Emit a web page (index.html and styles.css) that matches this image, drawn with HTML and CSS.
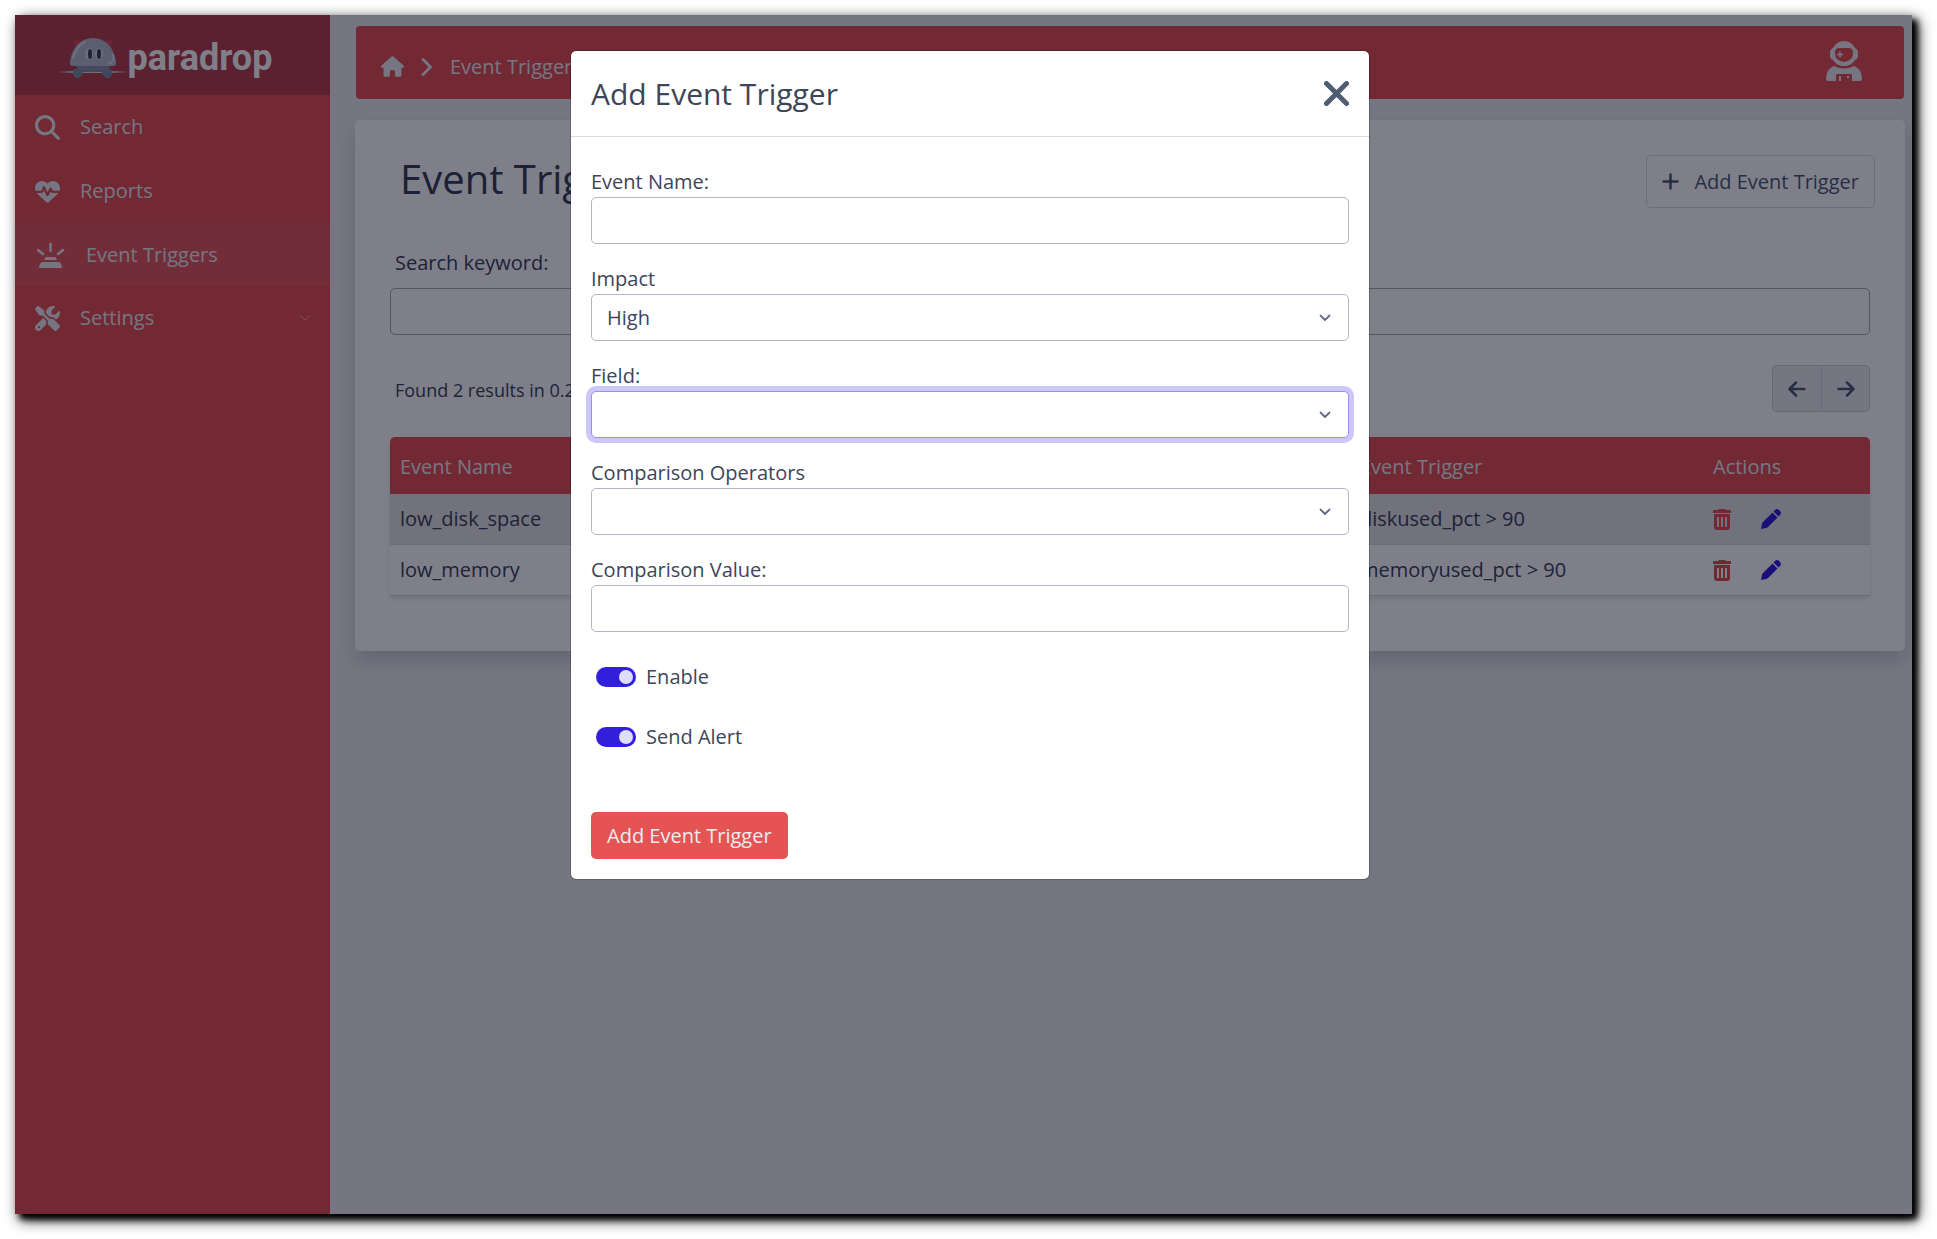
FILE: index.html
```html
<!DOCTYPE html>
<html lang="en">
<head>
    <meta charset="UTF-8">
    <meta name="viewport" content="width=device-width, initial-scale=1.0">
    <title>Paradrop - Event Triggers</title>
    <link rel="stylesheet" href="styles.css">
</head>
<body>

<!-- shared icons -->
<svg class="icon-defs" aria-hidden="true">
    <symbol id="icon-trash" viewBox="0 0 18 21">
        <path d="M6 0h6l1 1h4q1 0 1 1v2H0V2q0-1 1-1h4z"/>
        <path fill-rule="evenodd" d="M1 5h16v13q0 3-3 3H4q-3 0-3-3zM4 8v10h2V8zM8 8v10h2V8zM12 8v10h2V8z"/>
    </symbol>
    <symbol id="icon-pen" viewBox="0 0 20 20">
        <path d="M11.500 3.500l5 5L7 18q-1 1-2 1l-5 1 1-5q0-1 1-2z"/>
        <path d="M12.500 2.500L14 1q2-2 4.500.5T19 6l-1.500 1.500z"/>
    </symbol>
    <symbol id="icon-down" viewBox="0 0 12 8">
        <path d="M1.500 1.500L6 6l4.500-4.500" fill="none" stroke="currentColor" stroke-width="1.800" stroke-linecap="round" stroke-linejoin="round"/>
    </symbol>
</svg>

<div class="window">
    <aside class="sidebar">
        <a class="brand" href="#">
            <svg width="71" height="42" viewBox="0 0 71 42" aria-hidden="true">
                <defs>
                    <linearGradient id="wire" x1="0" x2="1">
                        <stop offset="0" stop-color="#d9d9df" stop-opacity="0"/>
                        <stop offset="0.25" stop-color="#d9d9df"/>
                        <stop offset="0.75" stop-color="#d9d9df"/>
                        <stop offset="1" stop-color="#d9d9df" stop-opacity="0"/>
                    </linearGradient>
                </defs>
                <circle cx="20" cy="6" r="4" fill="#d04a50"/>
                <circle cx="52" cy="6" r="4" fill="#d04a50"/>
                <rect x="0" y="34" width="71" height="2" fill="url(#wire)"/>
                <path d="M19 29h34l-3 6H22z" fill="#8993a1"/>
                <path d="M16 29q-4 0-3-5Q17 2 36 1q19 1 23 23 1 5-3 5z" fill="#b4bcc8"/>
                <path d="M16 21Q19 9 28 5M56 18q2 7-4 8" fill="none" stroke="#dce1e8" stroke-width="2" stroke-linecap="round"/>
                <ellipse cx="32" cy="17" rx="4" ry="6" fill="#d5dae2"/>
                <ellipse cx="42" cy="17" rx="4" ry="6" fill="#d5dae2"/>
                <ellipse cx="33" cy="17" rx="2" ry="5" fill="#3c4454"/>
                <ellipse cx="42" cy="17" rx="2" ry="5" fill="#3c4454"/>
                <path d="M16 33q4-3 10 0v4l-4 4h-4l-2-4z" fill="#8190a1"/>
                <path d="M55 33q-4-3-10 0v4l4 4h4l2-4z" fill="#8190a1"/>
            </svg>
            <span>paradrop</span>
        </a>
        <nav class="menu">
            <a class="menu-item" href="#">
                <svg width="25" height="25" viewBox="0 0 512 512" aria-hidden="true"><path d="M416 208c0 45.900-14.900 88.300-40 122.700L502.600 457.400c12.500 12.500 12.500 32.800 0 45.300s-32.800 12.500-45.300 0L330.700 376c-34.400 25.200-76.800 40-122.700 40C93.100 416 0 322.900 0 208S93.100 0 208 0S416 93.100 416 208zM208 352a144 144 0 1 0 0-288 144 144 0 1 0 0 288z"/></svg>
                Search
            </a>
            <a class="menu-item" href="#">
                <svg width="25" height="25" viewBox="0 0 512 512" aria-hidden="true"><path d="M228.300 469.100L47.600 300.400c-4.200-3.900-8.200-8.100-11.900-12.400h87c22.600 0 43-13.600 51.700-34.500l10.500-25.200 49.300 109.500c3.800 8.500 12.100 14 21.400 14.100s17.800-5 22-13.300L320 253.700l1.700 3.400c9.500 19 28.900 31 50.100 31H476.300c-3.700 4.300-7.700 8.500-11.900 12.400L283.700 469.100c-7.500 7-17.400 10.900-27.700 10.900s-20.200-3.900-27.700-10.900zM503.700 240h-132c-3 0-5.800-1.700-7.200-4.400l-23.200-46.300c-4.100-8.100-12.400-13.300-21.500-13.300s-17.400 5.100-21.500 13.300l-41.400 82.800L205.900 158.200c-3.900-8.700-12.700-14.300-22.200-14.100s-18.100 5.900-21.800 14.800l-31.800 76.300c-1.200 3-4.200 4.900-7.400 4.900H16c-2.600 0-5 .4-7.300 1.100C3 225.200 0 208.200 0 190.900v-5.800c0-69.900 50.500-129.500 119.400-141C165 36.500 211.400 51.400 244 84l12 12 12-12c32.600-32.600 79-47.500 124.600-39.900C461.500 55.600 512 115.200 512 185.100v5.800c0 16.900-2.800 33.500-8.300 49.100z"/></svg>
                Reports
            </a>
            <a class="menu-item active" href="#">
                <svg width="31" height="26" viewBox="0 0 31 26" aria-hidden="true">
                    <path d="M15.500 2v7M3 8l5 4M28 8l-5 4" fill="none" stroke="currentColor" stroke-width="2.500" stroke-linecap="round"/>
                    <path d="M9 18l1-2q0-1 2-1h7q2 0 2 1l1 2zM5 26q-1 0-1-1l1-3q1-2 3-2h15q3 0 3 2l1 3q0 1-1 1z"/>
                </svg>
                Event Triggers
            </a>
            <a class="menu-item" href="#">
                <svg width="25" height="25" viewBox="0 0 512 512" aria-hidden="true"><path d="M78.600 5C69.100-2.400 55.600-1.500 47 7L7 47c-8.500 8.500-9.400 22-2.100 31.600l80 104c4.500 5.900 11.600 9.400 19 9.400h54.100l109 109c-14.700 29-10 65.400 14.300 89.600l112 112c12.500 12.500 32.800 12.500 45.300 0l64-64c12.500-12.500 12.500-32.800 0-45.300l-112-112c-24.200-24.200-60.600-29-89.600-14.300l-109-109V104c0-7.500-3.500-14.500-9.400-19L78.600 5zM19.900 396.100C7.200 408.800 0 426.100 0 444.100C0 481.600 30.400 512 67.900 512c18 0 35.300-7.200 48-19.900L233.700 374.300c-7.800-20.900-9-43.600-3.600-65.100l-61.700-61.700L19.900 396.100zM512 144c0-10.500-1.100-20.700-3.200-30.500c-2.400-11.200-16.100-14.100-24.200-6l-63.900 63.900c-3 3-7.100 4.700-11.300 4.700H352c-8.800 0-16-7.200-16-16V102.600c0-4.200 1.700-8.300 4.700-11.300l63.900-63.900c8.100-8.100 5.200-21.800-6-24.200C388.700 1.100 378.500 0 368 0C288.500 0 224 64.500 224 144l0 .8 85.300 85.300c36-9.100 75.800 .5 104 28.700L429 274.500c49-23 83-72.800 83-130.500zM56 432a24 24 0 1 1 48 0 24 24 0 1 1 -48 0z"/></svg>
                Settings
                <svg class="menu-arrow" width="10" height="6" viewBox="0 0 10 6" aria-hidden="true"><path d="M0 0l5 5 5-5" fill="none" stroke="currentColor"/></svg>
            </a>
        </nav>
    </aside>

    <main class="content">
        <header class="topbar">
            <nav class="breadcrumb">
                <a href="#" aria-label="Home"><svg width="23" height="21" viewBox="0 0 576 512" aria-hidden="true"><path d="M575.800 255.500c0 18-15 32.100-32 32.100h-32l.7 160.200c0 2.700-.2 5.400-.5 8.100V472c0 22.100-17.900 40-40 40H456c-1.100 0-2.200 0-3.300-.1c-1.400 .1-2.800 .1-4.200 .1H416 392c-22.100 0-40-17.900-40-40V448 384c0-17.700-14.300-32-32-32H256c-17.700 0-32 14.300-32 32v64 24c0 22.100-17.900 40-40 40H160 128.100c-1.500 0-3-.1-4.500-.2c-1.200 .1-2.400 .2-3.600 .2H104c-22.100 0-40-17.900-40-40V360c0-.9 0-1.900 .1-2.800V287.600H32c-18 0-32-14-32-32.100c0-9 3-17 10-24L266.400 8c7-7 15-8 22-8s15 2 21 7L564.800 231.500c8 7 12 15 11 24z"/></svg></a>
                <svg width="12" height="18" viewBox="0 0 12 18" aria-hidden="true"><path d="M2 1.500L9.500 9 2 16.500" fill="none" stroke="currentColor" stroke-width="2.800" stroke-linecap="round" stroke-linejoin="round"/></svg>
                <a href="#">Event Triggers</a>
            </nav>
            <a class="user" href="#" aria-label="Account">
                <svg width="36" height="40" viewBox="0 0 36 40" aria-hidden="true">
                    <path fill-rule="evenodd" d="M18 0q7 0 11 7 3 1 3 5v2q0 4-3 5-4 6-11 6T7 19q-3-1-3-5v-2q0-4 3-5 4-7 11-7zM13 7q-4 0-4 5 0 8 9 9 9-1 9-9 0-5-4-5z"/>
                    <path d="M14 10.500v6M11 13.500h6" fill="none" stroke="currentColor" stroke-width="1.600"/>
                    <path fill-rule="evenodd" d="M8 25q10 5 20 0 8 3 8 13 0 2-2 2h-8v-6q0-1-1-1H11q-1 0-1 1v6H2q-2 0-2-2Q0 28 8 25z"/>
                    <path d="M13 35h2v5h-2zM21 35h2v2h-2z"/>
                </svg>
            </a>
        </header>

        <section class="card">
            <div class="card-head">
                <h1>Event Triggers</h1>
                <button class="btn-outline" type="button">
                    <svg width="17" height="17" viewBox="0 0 17 17" aria-hidden="true"><path d="M8.500 1.500v14M1.500 8.500h14" stroke="currentColor" stroke-width="2.500" stroke-linecap="round"/></svg>
                    Add Event Trigger
                </button>
            </div>
            <label class="search-label" for="search">Search keyword:</label>
            <input class="search-input" id="search" type="text">
            <div class="results">
                <p>Found 2 results in 0.2 seconds</p>
                <div class="pager">
                    <button type="button" aria-label="Previous"><svg width="18" height="16" viewBox="0 0 18 16" aria-hidden="true"><path d="M16.500 8H2M8 1.500L1.500 8 8 14.500" fill="none" stroke="currentColor" stroke-width="2.500" stroke-linecap="round" stroke-linejoin="round"/></svg></button>
                    <button type="button" aria-label="Next"><svg width="18" height="16" viewBox="0 0 18 16" aria-hidden="true"><path d="M1.500 8H16M10 1.500L16.500 8 10 14.500" fill="none" stroke="currentColor" stroke-width="2.500" stroke-linecap="round" stroke-linejoin="round"/></svg></button>
                </div>
            </div>
            <table>
                <thead>
                    <tr>
                        <th>Event Name</th>
                        <th class="col-trigger">Event Trigger</th>
                        <th class="col-actions">Actions</th>
                    </tr>
                </thead>
                <tbody>
                    <tr>
                        <td>low_disk_space</td>
                        <td>diskused_pct &gt; 90</td>
                        <td>
                            <div class="actions">
                                <button class="delete-btn" type="button" aria-label="Delete"><svg width="18" height="21"><use href="#icon-trash"/></svg></button>
                                <button class="edit-btn" type="button" aria-label="Edit"><svg width="20" height="20"><use href="#icon-pen"/></svg></button>
                            </div>
                        </td>
                    </tr>
                    <tr>
                        <td>low_memory</td>
                        <td>memoryused_pct &gt; 90</td>
                        <td>
                            <div class="actions">
                                <button class="delete-btn" type="button" aria-label="Delete"><svg width="18" height="21"><use href="#icon-trash"/></svg></button>
                                <button class="edit-btn" type="button" aria-label="Edit"><svg width="20" height="20"><use href="#icon-pen"/></svg></button>
                            </div>
                        </td>
                    </tr>
                </tbody>
            </table>
        </section>
    </main>

    <div class="backdrop">
        <div class="modal" role="dialog" aria-labelledby="modal-title">
            <div class="modal-header">
                <h2 id="modal-title">Add Event Trigger</h2>
                <button class="close-btn" type="button" aria-label="Close"><svg width="25" height="25" viewBox="0 0 25 25" aria-hidden="true"><path d="M2.500 2.500l20 20M22.500 2.500l-20 20" stroke="currentColor" stroke-width="5" stroke-linecap="round"/></svg></button>
            </div>
            <form class="modal-body">
                <div class="field">
                    <label for="event-name">Event Name:</label>
                    <input class="control" id="event-name" type="text">
                </div>
                <div class="field">
                    <label for="impact">Impact</label>
                    <div class="select">
                        <select class="control" id="impact">
                            <option>High</option>
                        </select>
                        <svg width="12" height="8" aria-hidden="true"><use href="#icon-down"/></svg>
                    </div>
                </div>
                <div class="field">
                    <label for="field">Field:</label>
                    <div class="select">
                        <select class="control focused" id="field">
                            <option></option>
                        </select>
                        <svg width="12" height="8" aria-hidden="true"><use href="#icon-down"/></svg>
                    </div>
                </div>
                <div class="field">
                    <label for="operators">Comparison Operators</label>
                    <div class="select">
                        <select class="control" id="operators">
                            <option></option>
                        </select>
                        <svg width="12" height="8" aria-hidden="true"><use href="#icon-down"/></svg>
                    </div>
                </div>
                <div class="field">
                    <label for="value">Comparison Value:</label>
                    <input class="control" id="value" type="text">
                </div>
                <div class="switches">
                    <div class="switch">
                        <input type="checkbox" id="enable" checked>
                        <label for="enable">Enable</label>
                    </div>
                    <div class="switch">
                        <input type="checkbox" id="alert" checked>
                        <label for="alert">Send Alert</label>
                    </div>
                </div>
                <button class="submit-btn" type="button">Add Event Trigger</button>
            </form>
        </div>
    </div>
</div>

</body>
</html>
```
FILE: styles.css
```css
* {
    box-sizing: border-box;
}
body {
    margin: 0;
    background-color: #fff;
    color: #3c4658;
    font-family: "Open Sans", "Noto Sans", sans-serif;
    font-size: 20px;
    line-height: 30px;
}
h1, h2, p {
    margin: 0;
    font-weight: 400;
}
a {
    color: inherit;
    text-decoration: none;
}
svg {
    display: block;
    flex: none;
    fill: currentColor;
}
button, input, select {
    font: inherit;
    color: inherit;
}
button {
    cursor: pointer;
}
.icon-defs {
    display: none;
}
.window {
    position: relative;
    display: flex;
    min-height: calc(100vh - 40px);
    margin: 15px 25px 25px 15px;
    background-color: #ebedef;
    box-shadow: 5px 5px 6px #000, 5px 5px 14px #000;
}

/* Sidebar */
.sidebar {
    width: 315px;
    flex: none;
    background-color: #e55353;
    color: #ebedef;
}
.brand {
    display: flex;
    justify-content: center;
    align-items: center;
    height: 80px;
    padding: 6px 16px 0 0;
    background-color: #b7424a;
    color: #fff;
    font-family: Roboto, sans-serif;
    font-size: 36px;
    font-weight: 700;
}
.menu-item {
    display: flex;
    align-items: center;
    gap: 20px;
    height: 64px;
    padding: 0 20px;
}
.menu-item.active {
    height: 63px;
    background-color: #e65b5b;
}
.menu-arrow {
    margin-left: auto;
    opacity: 0.5;
}

/* Content */
.content {
    flex: 1;
    min-width: 0;
    padding: 11px 7px 0 25px;
}
.topbar {
    display: flex;
    justify-content: space-between;
    align-items: center;
    height: 73px;
    margin: 0 1px 21px;
    padding: 0 42px 0 25px;
    border-radius: 4px;
    background-color: #e55353;
    color: #ebedef;
}
.breadcrumb {
    display: flex;
    align-items: center;
    gap: 17px;
    padding-top: 8px;
}
.user {
    padding-bottom: 4px;
}
.card {
    padding: 35px 35px 55px;
    border-radius: 5px;
    background-color: #fff;
    box-shadow: 0 10px 20px rgba(0, 0, 21, 0.15);
}
.card-head {
    display: flex;
    justify-content: space-between;
    margin: 0 -5px 40px 10px;
}
h1 {
    color: #3b4256;
    font-size: 40px;
    line-height: 48px;
}
.btn-outline {
    display: flex;
    align-items: center;
    gap: 15px;
    height: 53px;
    padding: 0 15px;
    border: 1px solid #d8dbe0;
    border-radius: 5px;
    background: none;
    color: #4f5d73;
}
.search-label {
    display: block;
    margin: 0 5px 10px;
}
.search-input, .control {
    display: block;
    width: 100%;
    height: 47px;
    padding: 7px 15px;
    border: 1px solid #b1b7c1;
    border-radius: 5px;
    background-color: #fff;
}
.search-input {
    border-color: #a6a9b8;
}
.results {
    display: flex;
    justify-content: space-between;
    align-items: center;
    margin: 30px 0 25px;
}
.results p {
    padding: 2px 0 0 5px;
    font-size: 18px;
}
.pager {
    display: flex;
}
.pager button {
    display: flex;
    justify-content: center;
    align-items: center;
    width: 49px;
    height: 47px;
    padding: 0;
    border: 1px solid #ced2d8;
    background-color: #ebedef;
    color: #4f5d73;
}
.pager button:first-child {
    border-right: none;
    border-radius: 5px 0 0 5px;
}
.pager button:last-child {
    border-radius: 0 5px 5px 0;
}
table {
    width: 100%;
    border-collapse: separate;
    border-spacing: 0;
    border-radius: 5px;
    box-shadow: 0 3px 5px rgba(0, 0, 21, 0.1);
    table-layout: fixed;
}
th, td {
    padding: 10px;
    border-bottom: 1px solid #d8dbe0;
    text-align: left;
}
th {
    padding: 15px 10px 11px;
    border-bottom-color: #e55353;
    background-color: #e55353;
    color: #ebedef;
    font-weight: 400;
}
th:first-child {
    border-top-left-radius: 5px;
}
th:last-child {
    border-top-right-radius: 5px;
}
.col-trigger {
    width: 353px;
}
.col-actions {
    width: 167px;
}
tbody tr:first-child td {
    background-color: #e5e5e5;
}
.actions {
    display: flex;
    align-items: center;
    gap: 30px;
}
.actions button {
    padding: 0;
    border: none;
    background: none;
}
.delete-btn {
    color: #e55353;
}
.edit-btn {
    color: #321fdb;
}

/* Modal */
.backdrop {
    position: absolute;
    inset: 0;
    display: flex;
    justify-content: center;
    align-items: flex-start;
    padding: 35px 0 0 13px;
    background-color: rgba(0, 0, 21, 0.5);
}
.modal {
    width: 800px;
    border: 1px solid rgba(0, 0, 21, 0.2);
    border-radius: 6px;
    background-color: #fff;
    background-clip: padding-box;
}
.modal-header {
    display: flex;
    justify-content: space-between;
    align-items: center;
    padding: 20px;
    border-bottom: 1px solid #d8dbe0;
}
h2 {
    font-size: 30px;
    line-height: 45px;
}
.close-btn {
    padding: 0;
    border: none;
    background: none;
    color: #4f5d73;
}
.modal-body {
    padding: 30px 20px 20px;
}
.field {
    margin-bottom: 20px;
}
.field label {
    display: block;
}
.select {
    display: grid;
    align-items: center;
}
.select > * {
    grid-area: 1 / 1;
}
.select select {
    appearance: none;
}
.select svg {
    justify-self: end;
    margin-right: 18px;
    color: #636f83;
    pointer-events: none;
}
.control.focused {
    border-color: #998fed;
    box-shadow: 0 0 0 5px #ccc7f6;
}
.switches {
    display: flex;
    flex-direction: column;
    gap: 30px;
    padding: 10px 5px 60px;
}
.switch {
    display: flex;
    align-items: center;
    gap: 10px;
}
.switch input {
    appearance: none;
    display: flex;
    justify-content: flex-end;
    align-items: center;
    width: 40px;
    height: 20px;
    margin: 0;
    padding: 3px;
    border-radius: 10px;
    background-color: #321fdb;
}
.switch input::before {
    content: "";
    width: 14px;
    height: 14px;
    border-radius: 50%;
    background-color: #e0ddfa;
}
.switch input:not(:checked) {
    justify-content: flex-start;
    background-color: #b1b7c1;
}
.submit-btn {
    display: block;
    height: 47px;
    padding: 0 16px;
    border: none;
    border-radius: 5px;
    background-color: #e55353;
    color: #ebedef;
}
```
